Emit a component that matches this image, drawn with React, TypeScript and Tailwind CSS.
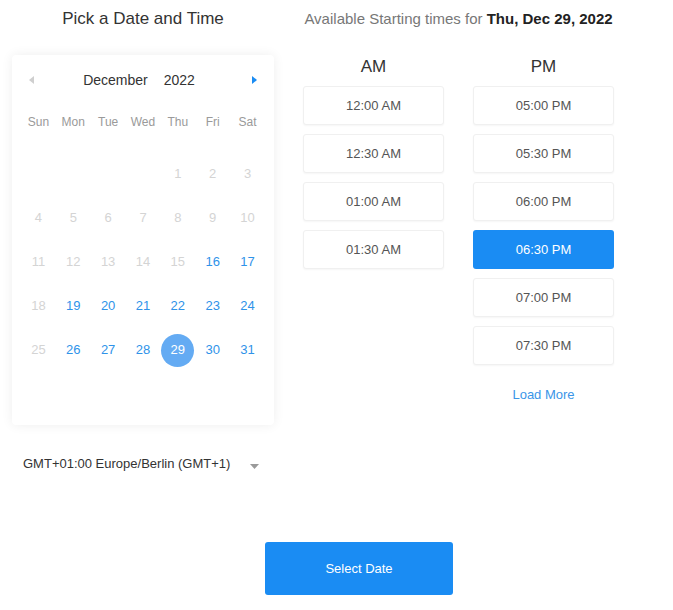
import React from "react";

const weekdays = ["Sun", "Mon", "Tue", "Wed", "Thu", "Fri", "Sat"];
const am = ["12:00 AM", "12:30 AM", "01:00 AM", "01:30 AM"];
const pm = ["05:00 PM", "05:30 PM", "06:00 PM", "06:30 PM", "07:00 PM", "07:30 PM"];

function Day({ n }: { n: number | null }) {
  if (n === null) return <div className="h-[44px]" />;
  const enabled = n >= 16 && n !== 18 && n !== 25;
  const selected = n === 29;
  return (
    <div className="h-[44px] flex items-center justify-center">
      {selected ? (
        <div className="w-[33px] h-[33px] rounded-full bg-[#64abf3] text-white flex items-center justify-center text-[13px]">
          {n}
        </div>
      ) : (
        <span className={enabled ? "text-[13px] text-[#2f93e9]" : "text-[13px] text-[#d4d4d4]"}>{n}</span>
      )}
    </div>
  );
}

function Slot({ t, active }: { t: string; active?: boolean }) {
  return (
    <div
      className={
        active
          ? "h-[39px] rounded-[3px] bg-[#1a8cf3] text-white flex items-center justify-center text-[13px]"
          : "h-[39px] rounded-[3px] border border-[#f0f0f0] bg-white text-[#555] flex items-center justify-center text-[13px] shadow-[0_1px_2px_rgba(0,0,0,0.04)]"
      }
    >
      {t}
    </div>
  );
}

export default function App() {
  const cells: (number | null)[] = [null, null, null, null];
  for (let i = 1; i <= 31; i++) cells.push(i);
  return (
    <div className="w-[673px] h-[610px] bg-white font-['Liberation_Sans',Arial,sans-serif]">
      <div className="flex pt-[8px]">
        <div className="ml-[12px] w-[262px]">
          <div className="h-[22px] leading-[22px] text-center text-[17px] text-[#333]">Pick a Date and Time</div>
          <div className="mt-[25px] h-[370px] rounded-[4px] bg-white shadow-[0_0_12px_rgba(0,0,0,0.07)] pt-[14px] px-[9px]">
            <div className="h-[22px] flex items-center justify-between px-[8px]">
              <svg width="6" height="8" viewBox="0 0 6 8">
                <path d="M5 0 L0 4 L5 8 Z" fill="#cfcfcf" />
              </svg>
              <div className="flex items-center gap-[16px] text-[14px] text-[#333] mr-[8px]">
                <span>December</span>
                <span>2022</span>
              </div>
              <svg width="6" height="8" viewBox="0 0 6 8">
                <path d="M1 0 L6 4 L1 8 Z" fill="#1a8cf3" />
              </svg>
            </div>
            <div className="mt-[21px] grid grid-cols-7 h-[20px]">
              {weekdays.map((w) => (
                <div key={w} className="text-center text-[12px] leading-[20px] text-[#9a9a9a]">
                  {w}
                </div>
              ))}
            </div>
            <div className="mt-[20px] grid grid-cols-7">
              {cells.map((n, i) => (
                <Day key={i} n={n} />
              ))}
            </div>
          </div>
          <div className="mt-[30px] flex items-center pl-[11px] h-[18px]">
            <span className="text-[13px] text-[#333]">GMT+01:00 Europe/Berlin (GMT+1)</span>
            <svg className="ml-[20px] mt-[4px]" width="9" height="5" viewBox="0 0 9 5">
              <path d="M0 0 L9 0 L4.5 5 Z" fill="#9a9a9a" />
            </svg>
          </div>
        </div>
        <div className="ml-[29px] w-[311px]">
          <div className="h-[22px] leading-[22px] text-center text-[15px] text-[#777] whitespace-nowrap">
            Available Starting times for <span className="font-bold text-[#222]">Thu, Dec 29, 2022</span>
          </div>
          <div className="mt-[27px] grid grid-cols-2 gap-x-[29px]">
            <div>
              <div className="h-[20px] leading-[20px] text-center text-[17px] text-[#333]">AM</div>
              <div className="mt-[9px] flex flex-col gap-[9px]">
                {am.map((t) => (
                  <Slot key={t} t={t} />
                ))}
              </div>
            </div>
            <div>
              <div className="h-[20px] leading-[20px] text-center text-[17px] text-[#333]">PM</div>
              <div className="mt-[9px] flex flex-col gap-[9px]">
                {pm.map((t) => (
                  <Slot key={t} t={t} active={t === "06:30 PM"} />
                ))}
              </div>
              <div className="mt-[21px] h-[18px] leading-[18px] text-center text-[13px] text-[#3a95e8]">Load More</div>
            </div>
          </div>
        </div>
      </div>
      <div className="mt-[69px] ml-[265px] w-[188px] h-[53px] rounded-[3px] bg-[#1a8cf3] text-white text-[13px] flex items-center justify-center">
        Select Date
      </div>
    </div>
  );
}
